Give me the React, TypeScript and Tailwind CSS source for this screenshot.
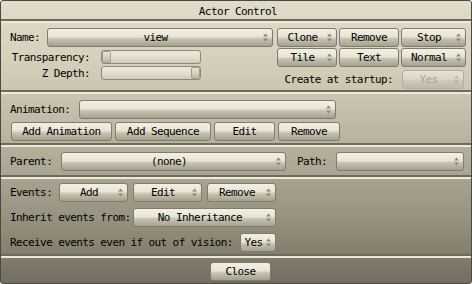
import clsx from "clsx";

const face = "font-['DejaVu_Sans_Mono',monospace] text-[11px] leading-[13px] tracking-[-0.6px] text-black";

function Arrows({ dim }: { dim?: boolean }) {
  return (
    <svg width="5" height="9" viewBox="0 0 5 9" className="mr-[4px] shrink-0">
      <path d="M2.5 0.5L5 3.5H0Z M0 5.5H5L2.5 8.5Z" fill={dim ? "#b4b0a2" : "#8c887a"} />
    </svg>
  );
}

function Btn({
  label,
  w,
  arrow,
  disabled,
}: {
  label: string;
  w: string;
  arrow?: boolean;
  disabled?: boolean;
}) {
  return (
    <div
      className={clsx(
        "flex h-[19px] shrink-0 items-center rounded-[3px] border",
        disabled
          ? "border-[#b3ae9f] bg-[linear-gradient(to_bottom,#e4e0d3,#dcd8ca_45%,#ccc7b7_60%,#bfbaa9)] text-[#a9a597]"
          : "border-[#7f7b6e] bg-[linear-gradient(to_bottom,#f3efe3,#e7e3d5_45%,#c8c3b1_58%,#a6a08e)]",
        w
      )}
    >
      <span className="flex-1 text-center leading-none">{label}</span>
      {arrow && <Arrows dim={disabled} />}
    </div>
  );
}

function Slider({ end }: { end?: boolean }) {
  return (
    <div
      className={clsx(
        "flex h-[14px] w-[100px] rounded-[3px] border border-[#8c887a] bg-[linear-gradient(to_bottom,#ece8db,#e2ddcf_55%,#cdc8b7)]",
        end ? "justify-end" : "justify-start"
      )}
    >
      <div className="h-full w-[9px] rounded-[2px] border border-[#a29d8e] bg-[linear-gradient(to_bottom,#e6e2d6,#d2cdbd_55%,#bab5a4)]" />
    </div>
  );
}

const section = "border-t-2 border-[#6f6a5d] shadow-[inset_0_2px_0_#eee8d4] pl-[9px]";

export default function App() {
  return (
    <div className={clsx("flex h-[284px] w-[472px] flex-col overflow-hidden rounded-[3px] border border-[#4c4941] bg-[linear-gradient(to_bottom,#e1dcc9,#d6d0bd_20%,#c3bdaa_40%,#aea896_58%,#9a9483_75%,#86806f_88%,#726d5f)]", face)}>
      <div className="flex h-[18px] shrink-0 items-center justify-center pl-[4px] pt-[2px]">Actor Control</div>

      <div className={clsx(section, "flex pb-[1px] pt-[7px]")}>
        <div className="flex w-[267px] flex-col">
          <div className="flex items-center">
            <span className="w-[37px]">Name:</span>
            <Btn label="view" w="w-[226px]" arrow />
          </div>
          <div className="mt-[3px] flex items-center">
            <span className="w-[80px] text-right">Transparency:</span>
            <div className="ml-[11px]">
              <Slider />
            </div>
          </div>
          <div className="mt-[2px] flex items-center">
            <span className="w-[80px] text-right">Z Depth:</span>
            <div className="ml-[11px]">
              <Slider end />
            </div>
          </div>
        </div>
        <div className="flex flex-col">
          <div className="grid grid-cols-[60px_60px_65px] gap-x-[2px] gap-y-[1px]">
            <Btn label="Clone" w="w-[60px]" arrow />
            <Btn label="Remove" w="w-[60px]" />
            <Btn label="Stop" w="w-[65px]" arrow />
            <Btn label="Tile" w="w-[60px]" arrow />
            <Btn label="Text" w="w-[60px]" />
            <Btn label="Normal" w="w-[65px]" arrow />
          </div>
          <div className="mt-[3px] flex items-center justify-end gap-[9px] pr-[2px]">
            <span>Create at startup:</span>
            <Btn label="Yes" w="w-[62px]" arrow disabled />
          </div>
        </div>
      </div>

      <div className={clsx(section, "flex flex-col pb-[2px] pt-[8px]")}>
        <div className="flex items-center">
          <span className="w-[69px]">Animation:</span>
          <Btn label="" w="w-[257px]" arrow />
        </div>
        <div className="mt-[3px] flex gap-[3px] pl-[1px]">
          <Btn label="Add Animation" w="w-[101px]" />
          <Btn label="Add Sequence" w="w-[96px]" />
          <Btn label="Edit" w="w-[61px]" />
          <Btn label="Remove" w="w-[62px]" />
        </div>
      </div>

      <div className={clsx(section, "flex items-center pb-[4px] pt-[7px]")}>
        <span className="w-[51px]">Parent:</span>
        <Btn label="(none)" w="w-[225px]" arrow />
        <span className="ml-[11px] w-[39px]">Path:</span>
        <Btn label="" w="w-[128px]" arrow />
      </div>

      <div className={clsx(section, "flex flex-col gap-[6px] pb-[2px] pt-[6px]")}>
        <div className="flex items-center">
          <span className="w-[49px]">Events:</span>
          <div className="flex gap-[5px]">
            <Btn label="Add" w="w-[69px]" arrow />
            <Btn label="Edit" w="w-[69px]" arrow />
            <Btn label="Remove" w="w-[69px]" arrow />
          </div>
        </div>
        <div className="flex items-center">
          <span className="w-[123px]">Inherit events from:</span>
          <Btn label="No Inheritance" w="w-[143px]" arrow />
        </div>
        <div className="flex items-center">
          <span className="w-[230px]">Receive events even if out of vision:</span>
          <Btn label="Yes" w="w-[36px]" arrow />
        </div>
      </div>

      <div className={clsx(section, "flex flex-1 justify-center pt-[6px] pl-[1px]")}>
        <Btn label="Close" w="w-[61px]" />
      </div>
    </div>
  );
}
